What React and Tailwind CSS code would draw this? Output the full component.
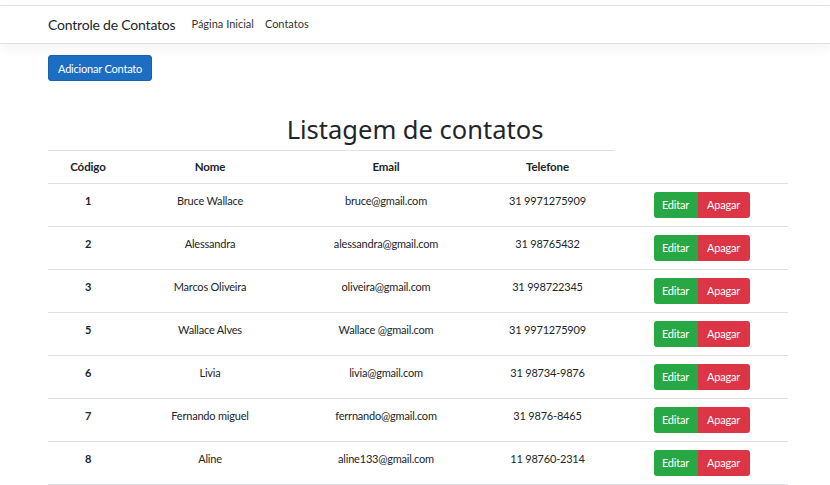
import React from 'react';

const contatos = [
  { id: 1, nome: 'Bruce Wallace', email: 'bruce@gmail.com', tel: '31 9971275909' },
  { id: 2, nome: 'Alessandra', email: 'alessandra@gmail.com', tel: '31 98765432' },
  { id: 3, nome: 'Marcos Oliveira', email: 'oliveira@gmail.com', tel: '31 998722345' },
  { id: 5, nome: 'Wallace Alves', email: 'Wallace @gmail.com', tel: '31 9971275909' },
  { id: 6, nome: 'Livia', email: 'livia@gmail.com', tel: '31 98734-9876' },
  { id: 7, nome: 'Fernando miguel', email: 'ferrnando@gmail.com', tel: '31 9876-8465' },
  { id: 8, nome: 'Aline', email: 'aline133@gmail.com', tel: '11 98760-2314' },
];

const Th = ({ children, className = '' }) => (
  <th className={`h-[33px] border-t border-b border-[#dee2e6] px-2 text-center align-middle text-[11.5px] tracking-[-0.1px] font-bold ${className}`}>
    {children}
  </th>
);

const Td = ({ children, className = '' }) => (
  <td className={`h-[43px] border-b border-[#dee2e6] px-2 pt-[8px] align-top text-center text-[11px] tracking-[-0.2px] leading-[18px] ${className}`}>
    {children}
  </td>
);

export default function App() {
  return (
    <div className="min-h-[485px] bg-white text-[#212529] font-['Lato','Noto_Sans',sans-serif]">
      <div className="h-[5px]" />
      <nav className="h-[39px] border-y border-[#dee2e6] shadow-[0_4px_12px_rgba(0,0,0,0.05)] flex items-center px-[48px]">
        <span className="text-[14px] tracking-[-0.2px] mr-[16px]">Controle de Contatos</span>
        <span className="text-[11px] text-[#333] mr-[11px]">Página Inicial</span>
        <span className="text-[11px] text-[#333]">Contatos</span>
      </nav>
      <div className="px-[48px]">
        <button className="mt-[11px] h-[26px] px-[9px] rounded-[3px] bg-[#1b6ec2] border border-[#1861ac] text-white text-[11px] tracking-[-0.2px] leading-none">
          Adicionar Contato
        </button>
        <h1 className="mt-[33px] h-[36px] text-center text-[25.5px] leading-[30px] font-normal font-['Noto_Sans',sans-serif]">Listagem de contatos</h1>
        <table className="w-[740px] border-collapse">
          <thead>
            <tr>
              <Th className="w-[80px]">Código</Th>
              <Th className="w-[164px]">Nome</Th>
              <Th className="w-[188px]">Email</Th>
              <Th className="w-[135px]">Telefone</Th>
              <th className="w-[173px] border-b border-[#dee2e6]" />
            </tr>
          </thead>
          <tbody>
            {contatos.map((c) => (
              <tr key={c.id}>
                <Td className="font-bold">{c.id}</Td>
                <Td>{c.nome}</Td>
                <Td>{c.email}</Td>
                <Td>{c.tel}</Td>
                <Td>
                  <div className="inline-flex h-[26px]">
                    <button className="w-[44px] rounded-l-[3px] bg-[#28a745] text-white text-[11px] tracking-[-0.2px]">Editar</button>
                    <button className="w-[52px] rounded-r-[3px] bg-[#dc3545] text-white text-[11px] tracking-[-0.2px]">Apagar</button>
                  </div>
                </Td>
              </tr>
            ))}
          </tbody>
        </table>
      </div>
    </div>
  );
}
